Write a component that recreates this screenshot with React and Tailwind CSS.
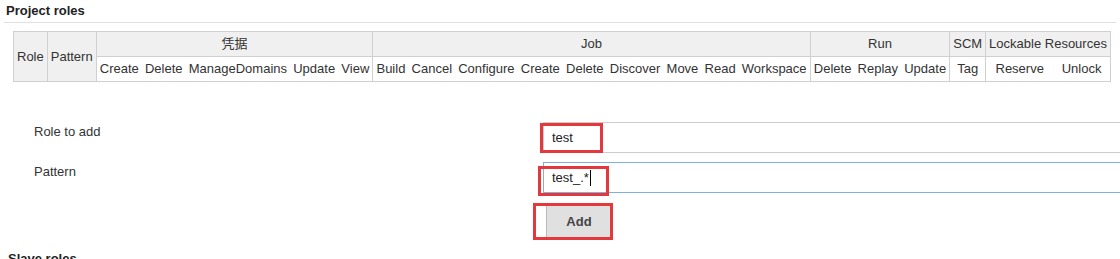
const groups = [
  { name: '凭据', perms: ['Create', 'Delete', 'ManageDomains', 'Update', 'View'] },
  { name: 'Job', perms: ['Build', 'Cancel', 'Configure', 'Create', 'Delete', 'Discover', 'Move', 'Read', 'Workspace'] },
  { name: 'Run', perms: ['Delete', 'Replay', 'Update'] },
  { name: 'SCM', perms: ['Tag'] },
  { name: 'Lockable Resources', perms: ['Reserve', 'Unlock'] },
];

const App = () => {
  return (
    <div className="w-[1120px] h-[259px] overflow-hidden bg-white text-[13px] text-[#333] font-['Liberation_Sans',Arial,sans-serif]">
      {/* Section header */}
      <div className="pl-[2px] pt-[3px] pb-[4px] mx-[4px] border-b border-[#e0e0e0]">
        <h2 className="text-[13px] font-bold text-[#222] leading-[15px]">Project roles</h2>
      </div>

      <div className="pl-[13px] pt-[8px]">
        <table className="border-collapse border border-[#d0d0d0]">
          <thead>
            <tr className="h-[25px]">
              <th rowSpan={2} className="bg-[#f0f0f0] border border-[#d0d0d0] font-normal px-[3px]">Role</th>
              <th rowSpan={2} className="bg-[#f0f0f0] border border-[#d0d0d0] font-normal px-[3px]">Pattern</th>
              {groups.map((g) => (
                <th
                  key={g.name}
                  colSpan={g.perms.length}
                  className="bg-[#f0f0f0] border border-[#d0d0d0] font-normal px-[3px] font-['Liberation_Sans','Noto_Sans_CJK_SC',sans-serif]"
                >
                  {g.name}
                </th>
              ))}
            </tr>
            <tr className="h-[25px]">
              {groups.map((g) =>
                g.perms.map((p, i) => (
                  <th
                    key={g.name + p}
                    className={
                      'font-normal px-[3.1px] bg-white border-b border-[#d0d0d0] ' +
                      (i === 0 ? 'border-l ' : '') +
                      (i === g.perms.length - 1 ? 'border-r' : '')
                    }
                  >
                    {p}
                  </th>
                ))
              )}
            </tr>
          </thead>
        </table>
      </div>

      {/* Add role form */}
      <div className="mt-[40px] flex flex-col">
        <div className="flex h-[40px]">
          <div className="w-[543px] shrink-0 pl-[34px] text-[#333]">Role to add</div>
          <div className="relative">
            <input
              readOnly
              value="test"
              className="w-[600px] h-[31px] border border-[#ccc] pl-[8px] text-[13px] text-[#222] outline-none"
            />
            <div className="absolute left-[-3px] top-[1px] w-[63px] h-[30px] border-[3px] border-[#e5383d]" />
          </div>
        </div>
        <div className="flex h-[44px]">
          <div className="w-[543px] shrink-0 pl-[34px] text-[#333]">Pattern</div>
          <div className="relative">
            <div className="w-[600px] h-[31px] border border-[#7fb1de] pl-[8px] text-[13px] text-[#222] flex items-center">
              test_.*<span className="inline-block w-[1px] h-[16px] bg-black ml-[1px]" />
            </div>
            <div className="absolute left-[-5px] top-[4px] w-[71px] h-[30px] border-[3px] border-[#e5383d]" />
          </div>
        </div>
        <div className="pl-[546px] relative">
          <button className="w-[65px] h-[31px] bg-[#e0e0e0] border-l border-[#bbb] font-bold text-[#444] text-[13px]">Add</button>
          <div className="absolute left-[533px] top-[-3px] w-[80px] h-[37px] border-[3px] border-[#e5383d]" />
        </div>
      </div>

      <div className="pl-[8px] mt-[12px] font-bold text-[13px] text-[#222]">Slave roles</div>
    </div>
  );
};

export default App;
